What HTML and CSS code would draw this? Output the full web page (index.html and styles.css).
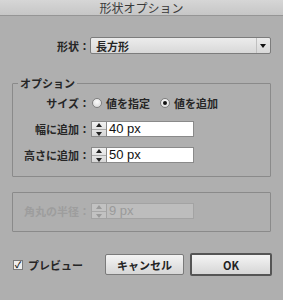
FILE: index.html
```html
<!DOCTYPE html>
<html lang="ja">
<head>
  <meta charset="UTF-8">
  <title>形状オプション</title>
  <link rel="stylesheet" href="styles.css">
</head>
<body>
  <div class="titlebar">形状オプション</div>

  <div class="dialog">
    <div class="row shape-row">
      <span class="label">形状：</span>
      <div class="select">
        <span class="select-value">長方形</span>
        <span class="select-arrow"></span>
      </div>
    </div>

    <fieldset class="group options">
      <legend>オプション</legend>
      <div class="row size-row">
        <span class="label">サイズ：</span>
        <span class="radio"><span class="dot"></span>値を指定</span>
        <span class="radio checked"><span class="dot"></span>値を追加</span>
      </div>
      <div class="row field-row">
        <span class="label">幅に追加：</span>
        <span class="spin"><span class="up"></span><span class="down"></span></span>
        <span class="input">40 px</span>
      </div>
      <div class="row field-row">
        <span class="label">高さに追加：</span>
        <span class="spin"><span class="up"></span><span class="down"></span></span>
        <span class="input">50 px</span>
      </div>
    </fieldset>

    <fieldset class="group disabled">
      <div class="row">
        <span class="label">角丸の半径：</span>
        <span class="spin"><span class="up"></span><span class="down"></span></span>
        <span class="input">9 px</span>
      </div>
    </fieldset>

    <div class="footer">
      <span class="check"><span class="box">✓</span>プレビュー</span>
      <button class="btn cancel">キャンセル</button>
      <button class="btn ok">OK</button>
    </div>
  </div>
</body>
</html>
```

FILE: styles.css
```css
body {
  margin: 0;
  width: 283px;
  height: 300px;
  background-color: #afafaf;
  font-family: "Noto Sans CJK JP", "Liberation Sans", sans-serif;
  font-size: 11px;
  color: #262626;
  overflow: hidden;
}
.titlebar {
  height: 15px;
  line-height: 15px;
  text-align: center;
  font-size: 12px;
  color: #3a3a3a;
  background: linear-gradient(#d6d6d6, #c6c6c6);
  border-bottom: 1px solid #959595;
}
.row {
  display: flex;
  align-items: center;
  height: 16px;
}
.label {
  text-align: right;
  font-weight: bold;
  white-space: nowrap;
}
.shape-row {
  margin-top: 21px;
  height: 17px;
}
.shape-row .label {
  width: 90px;
}
.select {
  width: 179px;
  height: 15px;
  display: flex;
  align-items: center;
  border: 1px solid #7c7c7c;
  border-radius: 2px;
  background: linear-gradient(#ececec, #d8d8d8);
}
.select-value {
  flex: 1;
  padding-left: 5px;
  font-weight: bold;
}
.select-arrow {
  width: 13px;
  height: 15px;
  border-left: 1px solid #c0c0c0;
  position: relative;
}
.select-arrow::after {
  content: "";
  position: absolute;
  left: 3px;
  top: 6px;
  border-left: 3px solid transparent;
  border-right: 3px solid transparent;
  border-top: 4px solid #111;
}
.group {
  margin: 0 12px;
  border: 1px solid #8a8a8a;
  border-radius: 1px;
  min-inline-size: 0;
}
.group legend {
  margin-left: 5px;
  padding: 0 2px;
  font-weight: bold;
  font-size: 11px;
  line-height: 14px;
}
.options {
  margin-top: 22px;
  padding: 5px 0 13px;
}
.group .label {
  width: 77px;
}
.radio {
  display: flex;
  align-items: center;
  margin-left: 2px;
  margin-right: 8px;
  font-weight: bold;
}
.dot {
  width: 8px;
  height: 8px;
  margin-right: 4px;
  border: 1px solid #808080;
  border-radius: 50%;
  background: radial-gradient(circle at 50% 35%, #fcfcfc, #d4d4d4);
  position: relative;
}
.checked .dot::after {
  content: "";
  position: absolute;
  left: 2px;
  top: 2px;
  width: 4px;
  height: 4px;
  border-radius: 50%;
  background: #111;
}
.field-row {
  margin-top: 10px;
}
.spin {
  width: 14px;
  height: 14px;
  margin-left: 1px;
  border: 1px solid #8a8a8a;
  background: linear-gradient(#f2f2f2, #d6d6d6);
  display: flex;
  flex-direction: column;
}
.spin span {
  flex: 1;
  position: relative;
}
.spin .up {
  border-bottom: 1px solid #aaa;
}
.spin .up::after,
.spin .down::after {
  content: "";
  position: absolute;
  left: 4px;
  border-left: 3px solid transparent;
  border-right: 3px solid transparent;
}
.spin .up::after {
  top: 1px;
  border-bottom: 4px solid #222;
}
.spin .down::after {
  top: 2px;
  border-top: 4px solid #222;
}
.input {
  width: 84px;
  height: 14px;
  line-height: 14px;
  padding-left: 2px;
  border: 1px solid #8a8a8a;
  border-left: none;
  background: #fff;
  font-family: "Liberation Sans", sans-serif;
  font-size: 13px;
  color: #111;
}
.group.disabled {
  margin-top: 15px;
  padding: 10px 0 12px;
}
.disabled .label {
  color: #9d9d9d;
}
.disabled .spin {
  border-color: #a3a3a3;
  background: #c2c2c2;
}
.disabled .spin .up {
  border-bottom-color: #a8a8a8;
}
.disabled .spin .up::after {
  border-bottom-color: #9a9a9a;
}
.disabled .spin .down::after {
  border-top-color: #9a9a9a;
}
.disabled .input {
  background: #bdbdbd;
  border-color: #a3a3a3;
  color: #9a9a9a;
}
.footer {
  display: flex;
  align-items: center;
  margin: 21px 0 0 13px;
}
.check {
  display: flex;
  align-items: center;
  font-weight: bold;
  width: 92px;
}
.box {
  width: 8px;
  height: 8px;
  margin-right: 5px;
  border: 1px solid #7a7a7a;
  background: #eee;
  font-size: 9px;
  line-height: 8px;
  text-align: center;
  font-weight: bold;
}
.btn {
  font-family: "Noto Sans CJK JP", "Liberation Sans", sans-serif;
  font-size: 11px;
  font-weight: bold;
  color: #222;
  padding: 0;
  border: 1px solid #7a7a7a;
  border-radius: 2px;
  background: linear-gradient(#f4f4f4, #d6d6d6);
}
.cancel {
  width: 79px;
  height: 21px;
}
.ok {
  width: 82px;
  height: 23px;
  margin-left: 6px;
  border: 2px solid #555;
}
```
